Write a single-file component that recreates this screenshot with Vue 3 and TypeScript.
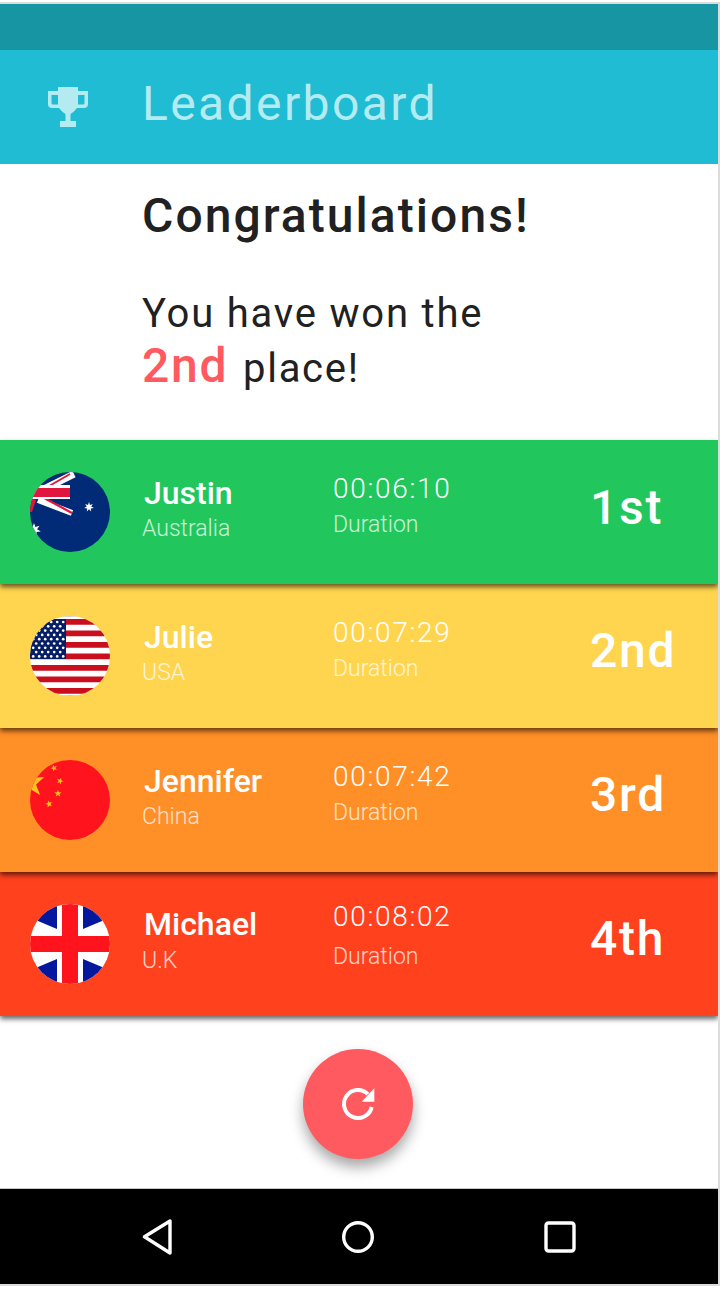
<script setup lang="ts">
interface Row { name: string; country: string; time: string; rank: string; cls: string; flag: string }
const rows: Row[] = [
  { name: 'Justin', country: 'Australia', time: '00:06:10', rank: '1st', cls: 'green', flag: 'au' },
  { name: 'Julie', country: 'USA', time: '00:07:29', rank: '2nd', cls: 'yellow', flag: 'us' },
  { name: 'Jennifer', country: 'China', time: '00:07:42', rank: '3rd', cls: 'orange', flag: 'cn' },
  { name: 'Michael', country: 'U.K', time: '00:08:02', rank: '4th', cls: 'red', flag: 'uk' }
]
const stripes = [0, 1, 2, 3, 4, 5, 6]
const star = 'M0,-5 L1.2,-1.6 4.8,-1.5 1.9,0.6 2.9,4 0,2 -2.9,4 -1.9,0.6 -4.8,-1.5 -1.2,-1.6Z'
const star7 = 'M0,-5 L1,-2.1 3.9,-3.1 2.2,-.5 4.9,1.1 1.8,1.4 2.2,4.5 0,2.3 -2.2,4.5 -1.8,1.4 -4.9,1.1 -2.2,-.5 -3.9,-3.1 -1,-2.1Z'
const dots: number[][] = []
for (let y = 0; y < 9; y++) {
  const n = y % 2 ? 5 : 6
  for (let x = 0; x < n; x++) dots.push([3.2 + x * 6 + (y % 2 ? 3 : 0), 6 + y * 4.3])
}
</script>

<template>
  <div class="phone">
    <div class="status"></div>
    <header class="appbar">
      <svg class="trophy" viewBox="0 0 40 40" width="40" height="40">
        <path d="M10 0H30V4H40V17Q40 21 36 21H29Q26 25 22.5 27V34H28V40H12V34H17.5V27Q14 25 11 21H4Q0 21 0 17V4H10ZM3.5 8V16Q3.5 17.5 5 17.5H10V8ZM30 8V17.5H35Q36.5 17.5 36.5 16V8Z" fill="#b4ebf1" fill-rule="evenodd"/>
      </svg>
      <h1>Leaderboard</h1>
    </header>
    <section class="intro">
      <h2>Congratulations!</h2>
      <p class="won">You have won the</p>
      <p class="place"><b>2nd</b> place!</p>
    </section>
    <ul class="list">
      <li v-for="r in rows" :key="r.name" class="row" :class="r.cls">
        <span class="flag">
          <svg viewBox="0 0 80 80" width="80" height="80">
            <template v-if="r.flag === 'au'">
              <rect width="80" height="80" fill="#012a77"/>
              <path d="M10 19L44 2" stroke="#fff" stroke-width="7"/>
              <path d="M8 28L42 41" stroke="#fff" stroke-width="6"/>
              <path d="M14 17L40 2" stroke="#e0163f" stroke-width="2"/>
              <path d="M16 27L42 41" stroke="#e0163f" stroke-width="2.2"/>
              <rect y="13" width="40" height="14" fill="#fff"/>
              <rect y="16" width="40" height="9" fill="#e0163f"/>
              <path d="M0 26L6 28L2 40H0Z" fill="#e0163f"/>
              <path :d="star7" transform="translate(59 35)" fill="#fff"/>
              <path :d="star7" transform="translate(4 58) scale(1.4)" fill="#fff"/>
            </template>
            <template v-else-if="r.flag === 'us'">
              <rect width="80" height="80" fill="#fff"/>
              <rect v-for="s in stripes" :key="s" x="0" :y="3 + s * 11.5" width="80" height="5.75" fill="#c90e1e"/>
              <rect y="0" width="80" height="1" fill="#ccc"/>
              <rect y="79" width="80" height="1" fill="#b8c4e0"/>
              <rect x="0" y="3" width="36" height="40" fill="#051e65"/>
              <circle v-for="(d, i) in dots" :key="i" :cx="d[0]" :cy="d[1]" r="1.35" fill="#fff"/>
            </template>
            <template v-else-if="r.flag === 'cn'">
              <rect width="80" height="80" fill="#ff141e"/>
              <path :d="star" transform="translate(0 23) rotate(67) scale(3.1)" fill="#ffc21c"/>
              <path :d="star" transform="translate(24 8) rotate(-20) scale(.7)" fill="#ffc21c"/>
              <path :d="star" transform="translate(30 21) rotate(20) scale(.7)" fill="#ffc21c"/>
              <path :d="star" transform="translate(28 33.5) scale(.75)" fill="#ffc21c"/>
              <path :d="star" transform="translate(19 44) rotate(-15) scale(.75)" fill="#ffc21c"/>
            </template>
            <template v-else>
              <rect width="80" height="80" fill="#fff"/>
              <path d="M27 0V25L8 17V0ZM53 0V25L72 17V0ZM27 80V55L8 63V80ZM53 80V55L72 63V80Z" fill="#03189c"/>
              <rect x="32" width="16" height="80" fill="#ff141e"/>
              <rect y="32" width="80" height="16" fill="#ff141e"/>
            </template>
          </svg>
        </span>
        <div class="who">
          <strong>{{ r.name }}</strong>
          <small>{{ r.country }}</small>
        </div>
        <div class="dur">
          <span class="time">{{ r.time }}</span>
          <small>Duration</small>
        </div>
        <div class="rank">{{ r.rank }}</div>
      </li>
    </ul>
    <div class="action">
      <button class="fab" aria-label="Replay">
        <svg viewBox="0 0 36 36" width="36" height="36" fill="none">
          <path d="M27.9 8.1A14 14 0 1 0 31.7 21" stroke="#fff" stroke-width="4"/>
          <path d="M34.3 2.3V15.7H21.7Z" fill="#fff"/>
        </svg>
      </button>
    </div>
    <nav class="nav">
      <svg viewBox="0 0 32 36" width="32" height="36" fill="none"><path d="M28 2V34L2.5 17.8Z" stroke="#fff" stroke-width="3.4" stroke-linejoin="round"/></svg>
      <svg class="home" viewBox="0 0 32 32" width="32" height="32" fill="none"><circle cx="16" cy="16" r="14.3" stroke="#fff" stroke-width="3.4"/></svg>
      <svg viewBox="0 0 32 32" width="32" height="32" fill="none"><rect x="2" y="2" width="28" height="28" rx="2.5" stroke="#fff" stroke-width="3.4"/></svg>
    </nav>
  </div>
</template>

<style>
html, body { margin: 0; background: #fff; }
</style>

<style scoped>
.phone {
  width: 718px;
  height: 1280px;
  margin-top: 2px;
  border-top: 2px solid #dcdcdc;
  border-right: 2px solid #dcdcdc;
  border-bottom: 2px solid #dcdcdc;
  display: flex;
  flex-direction: column;
  font-family: Roboto, "Noto Sans", sans-serif;
  background: #fff;
  overflow: hidden;
}
.status { height: 46px; background: #1795a3; flex: none; }
.appbar { height: 114px; background: #20bcd4; display: flex; align-items: center; flex: none; padding-left: 48px; box-sizing: border-box; }
.trophy { flex: none; }
.appbar h1 { margin: 0 0 6px 54px; font-size: 48px; font-weight: 400; letter-spacing: 2.4px; color: #b4ebf1; line-height: 1; }
.intro { height: 276px; flex: none; padding: 27px 0 0 142px; box-sizing: border-box; color: #212121; }
.intro h2 { margin: 0; font-size: 48px; font-weight: 500; line-height: 50px; letter-spacing: 2.05px; }
.won { margin: 45px 0 0; font-size: 40px; line-height: 56px; letter-spacing: 1.8px; font-weight: 400; }
.place { margin: -4px 0 0; font-size: 40px; line-height: 56px; letter-spacing: 1.7px; font-weight: 400; }
.place b { color: #ff5a5f; font-size: 48px; font-weight: 500; letter-spacing: 1.8px; margin-right: 3px; }
.list { list-style: none; margin: 0; padding: 0; flex: none; }
.row { height: 144px; display: grid; grid-template-columns: 142px 191px 257px 1fr; align-items: center; position: relative; box-shadow: 0 3px 5px rgba(0,0,0,.6); color: #fff; }
.green { background: #21c75c; z-index: 4; }
.yellow { background: #ffd54f; z-index: 3; }
.orange { background: #ff8f26; z-index: 2; }
.red { background: #ff411e; z-index: 1; }
.flag { margin-left: 30px; width: 80px; height: 80px; border-radius: 50%; overflow: hidden; display: block; }
.flag svg { display: block; }
.who, .dur { display: flex; flex-direction: column; }
.who strong { font-size: 32px; font-weight: 500; line-height: 36px; padding-left: 2px; margin-top: -2px; }
.red .who strong { margin-top: -3px; margin-bottom: 1px; }
.who small, .dur small { font-size: 23px; font-weight: 300; line-height: 36px; opacity: .75; }
.dur { padding-bottom: 6px; }
.time { font-size: 28px; font-weight: 300; letter-spacing: 1.7px; line-height: 36px; margin-top: -4px; }
.red .time { margin-top: -8px; margin-bottom: 4px; }
.rank { font-size: 48px; font-weight: 500; letter-spacing: 1.7px; padding-bottom: 12px; }
.green .rank { padding-bottom: 10px; }
.action { flex: 1; display: flex; justify-content: center; padding-top: 33px; padding-right: 2px; box-sizing: border-box; }
.fab { width: 110px; height: 110px; padding: 0; border: 0; border-radius: 50%; background: #ff5a5f; box-shadow: 0 8px 14px rgba(0,0,0,.35); display: flex; align-items: center; justify-content: center; flex: none; }
.nav { height: 96px; flex: none; background: #000; border-top: 1px solid #c8c8c8; box-sizing: border-box; display: flex; justify-content: space-between; align-items: center; padding: 0 142px; }
.home { margin-left: -2px; }
</style>
